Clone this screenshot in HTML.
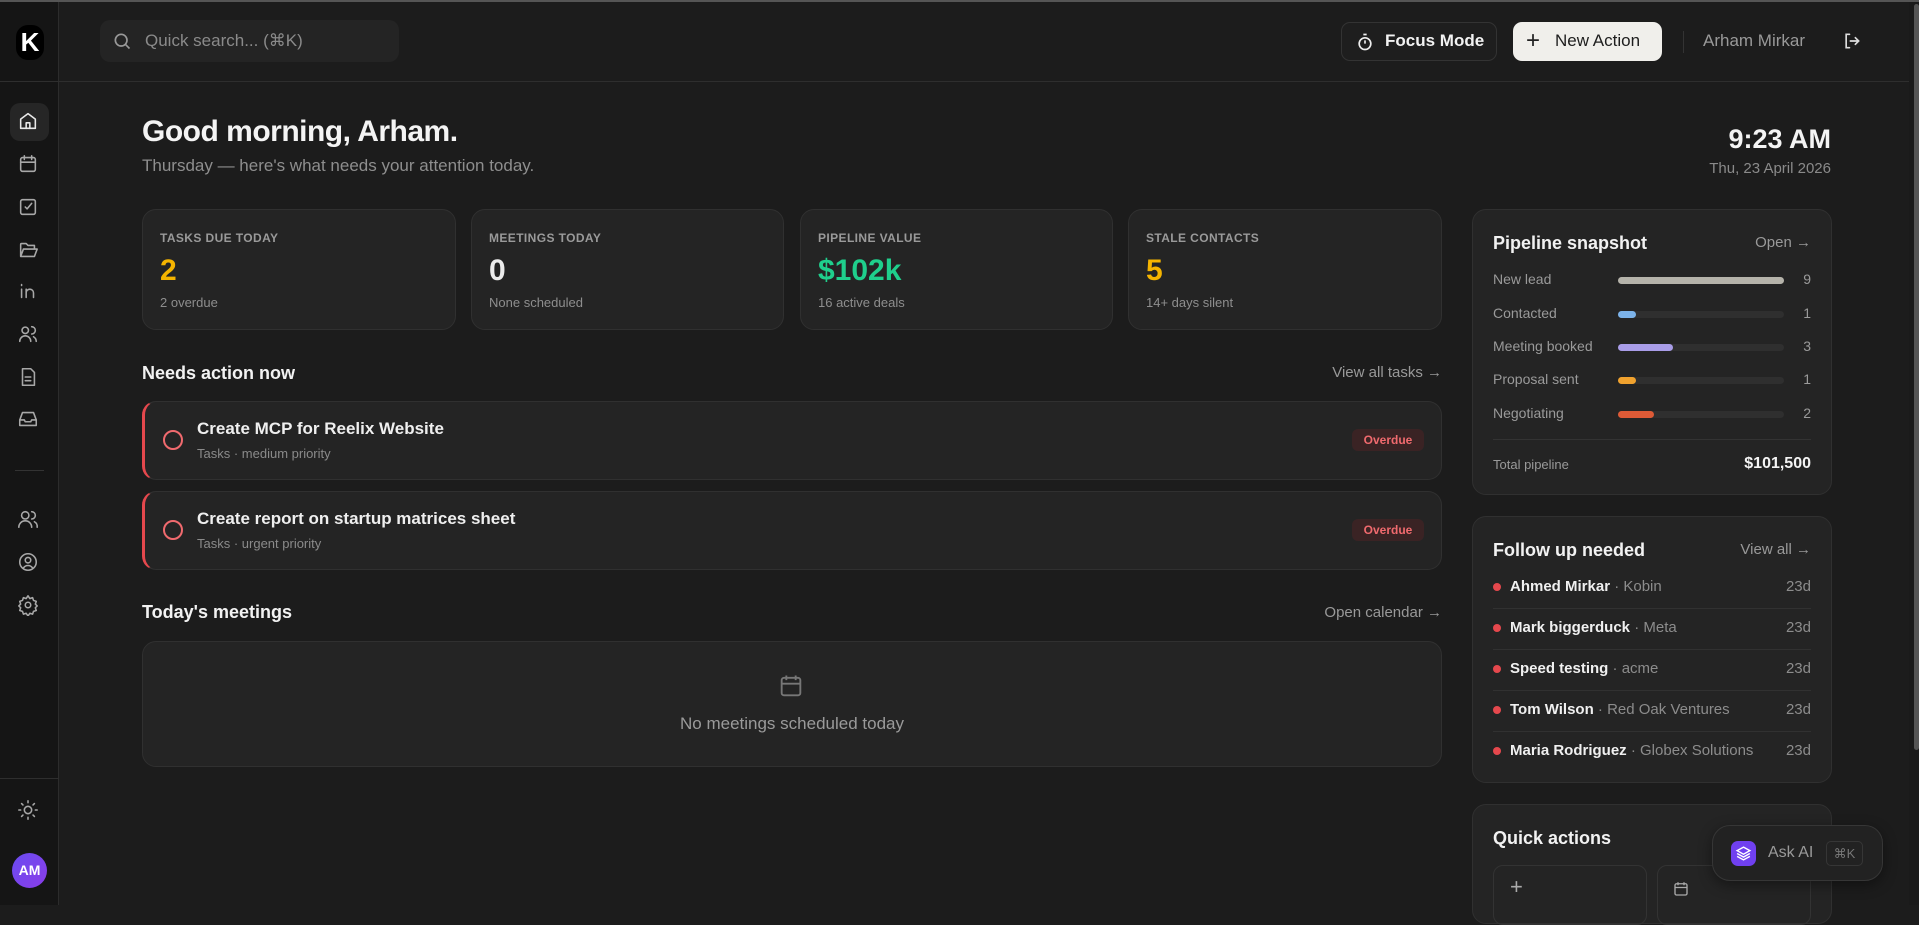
<!DOCTYPE html>
<html><head><meta charset="utf-8"><style>
*{box-sizing:border-box;margin:0;padding:0}
body{width:1919px;height:905px;overflow:hidden;background:#1c1c1c;font-family:"Liberation Sans",sans-serif;color:#ececec;position:relative}
.a{position:absolute}
.side{left:0;top:0;width:59px;height:905px;background:#151515;border-right:1px solid #2c2c2c}
.ic{position:absolute;left:17px;width:24px;height:24px}
.ic svg{width:22px;height:22px;stroke:#a8a8a8;fill:none;stroke-width:1.7;stroke-linecap:round;stroke-linejoin:round}
.card{position:absolute;background:#242424;border:1px solid #303030;border-radius:14px}
.lbl{font-size:12px;font-weight:bold;color:#9a9a9a;letter-spacing:.4px}
.big{font-size:30px;font-weight:bold;margin-top:9px}
.sub{font-size:13px;color:#8e8e8e;margin-top:7px}
.h{font-size:18px;font-weight:bold;color:#f2f2f2}
.lnk{font-size:15px;color:#999}
.row{position:absolute;left:20px;right:20px;font-size:14px;color:#9a9a9a}
.bar{position:absolute;left:125px;width:166px;height:7px;border-radius:4px;background:#2f2f2f;top:6px}
.bar i{display:block;height:7px;border-radius:4px}
.num{position:absolute;right:0;top:0}
.fu{position:absolute;left:20px;right:20px;height:41px;border-bottom:1px solid #313131;font-size:15px}
.fu b{color:#f0f0f0;font-weight:bold}
.fu span{color:#8c8c8c}
.fu .d{position:absolute;left:0;top:15px;width:8px;height:8px;border-radius:50%;background:#e5484d}
.fu .t{position:absolute;left:17px;top:10px}
.fu .r{position:absolute;right:0;top:10px;color:#8c8c8c}
</style></head><body>
<div class="a side"></div>
<div class="a" style="left:0;top:0;width:1919px;height:2px;background:#555;z-index:5"></div>
<div class="a" style="left:0;top:81px;width:1909px;height:1px;background:#2e2e2e"></div>
<!-- logo -->
<div class="a" style="left:16px;top:25px;width:28px;height:35px;background:#000;border-radius:12px;color:#fff;font-weight:bold;font-size:26px;text-align:center;line-height:35px">K</div>
<!-- sidebar icons -->
<div class="a" style="left:10px;top:103px;width:39px;height:38px;background:#262626;border-radius:10px"></div>
<div class="ic" style="top:110px"><svg viewBox="0 0 24 24" style="stroke:#e8e8e8"><path d="M4 10l8-6 8 6v10H4z"/><path d="M10 20v-6h4v6"/></svg></div>
<div class="ic" style="top:153px"><svg viewBox="0 0 24 24"><rect x="4" y="5" width="16" height="15" rx="2"/><path d="M4 10h16M8 3v4M16 3v4"/></svg></div>
<div class="ic" style="top:196px"><svg viewBox="0 0 24 24"><rect x="4" y="4" width="16" height="16" rx="2"/><path d="M9 12l2 2 5-6"/></svg></div>
<div class="ic" style="top:239px"><svg viewBox="0 0 24 24"><path d="M4 19V6a1 1 0 011-1h5l2 2h7v4M4 19l3-8h15l-3 8z"/></svg></div>
<div class="ic" style="top:280px"><svg viewBox="0 0 24 24"><path d="M5 10v9M5 5v1M10 19v-9M10 14a4 4 0 018 0v5"/></svg></div>
<div class="ic" style="top:323px"><svg viewBox="0 0 24 24"><circle cx="9" cy="8" r="3.5"/><path d="M3 20a6 6 0 0112 0M16 4a4 4 0 010 8M21 20a6 6 0 00-3-5"/></svg></div>
<div class="ic" style="top:366px"><svg viewBox="0 0 24 24"><path d="M6 3h9l4 4v14H6z"/><path d="M9 12h6M9 16h6"/></svg></div>
<div class="ic" style="top:408px"><svg viewBox="0 0 24 24"><path d="M3 13l3-8h12l3 8v6H3z"/><path d="M3 13h5l1 2h6l1-2h5"/></svg></div>
<div class="a" style="left:15px;top:470px;width:29px;height:1px;background:#333"></div>
<div class="ic" style="top:508px"><svg viewBox="0 0 24 24"><circle cx="9" cy="8" r="4"/><path d="M2 21a7 7 0 0114 0M16 4a4 4 0 010 8M22 21a6 6 0 00-3-6"/></svg></div>
<div class="ic" style="top:551px"><svg viewBox="0 0 24 24"><circle cx="12" cy="12" r="9"/><circle cx="12" cy="10" r="3"/><path d="M7 18.5a6 6 0 0110 0"/></svg></div>
<div class="ic" style="top:594px"><svg viewBox="0 0 24 24"><circle cx="12" cy="12" r="3"/><path d="M12 2l2 3 3-1 1 3 3 1-1 3 2 2-2 2 1 3-3 1-1 3-3-1-2 3-2-3-3 1-1-3-3-1 1-3-2-2 2-2-1-3 3-1 1-3 3 1z"/></svg></div>
<div class="a" style="left:0;top:778px;width:59px;height:1px;background:#2e2e2e"></div>
<div class="ic" style="top:799px"><svg viewBox="0 0 24 24"><circle cx="12" cy="12" r="4"/><path d="M12 2v2M12 20v2M2 12h2M20 12h2M5 5l1.5 1.5M17.5 17.5L19 19M5 19l1.5-1.5M17.5 6.5L19 5"/></svg></div>
<div class="a" style="left:12px;top:853px;width:35px;height:35px;border-radius:50%;background:linear-gradient(135deg,#6a4cf0,#8a3ce8);color:#fff;font-weight:bold;font-size:14px;text-align:center;line-height:35px">AM</div>
<!-- top bar -->
<div class="a" style="left:100px;top:20px;width:299px;height:42px;background:#242424;border-radius:10px"></div>
<svg class="a" style="left:112px;top:31px" width="20" height="20" viewBox="0 0 24 24" fill="none" stroke="#999" stroke-width="2"><circle cx="11" cy="11" r="7"/><path d="M16 16l5 5"/></svg>
<div class="a" style="left:145px;top:31px;font-size:17px;color:#8a8a8a">Quick search... (⌘K)</div>
<div class="a" style="left:1341px;top:22px;width:156px;height:39px;border:1px solid #333;border-radius:9px;background:#1e1e1e"></div>
<svg class="a" style="left:1355px;top:32px" width="20" height="20" viewBox="0 0 24 24" fill="none" stroke="#eee" stroke-width="2"><circle cx="12" cy="14" r="7"/><path d="M12 14V10M10 3h4"/></svg>
<div class="a" style="left:1385px;top:31px;font-size:17px;font-weight:bold;color:#f2f2f2">Focus Mode</div>
<div class="a" style="left:1513px;top:22px;width:149px;height:39px;background:#f0efeb;border-radius:9px"></div>
<div class="a" style="left:1526px;top:27px;font-size:24px;color:#222">+</div>
<div class="a" style="left:1555px;top:31px;font-size:17px;color:#1e1e1e">New Action</div>
<div class="a" style="left:1683px;top:31px;width:1px;height:22px;background:#333"></div>
<div class="a" style="left:1703px;top:31px;font-size:17px;color:#999">Arham Mirkar</div>
<svg class="a" style="left:1842px;top:31px" width="20" height="20" viewBox="0 0 24 24" fill="none" stroke="#ddd" stroke-width="2" stroke-linecap="round"><path d="M9 4H5v16h4M10 12h10M16 8l4 4-4 4"/></svg>
<!-- scrollbar -->
<div class="a" style="left:1909px;top:2px;width:10px;height:903px;background:#1a1a1a"></div>
<div class="a" style="left:1914px;top:4px;width:5px;height:746px;background:#555;border-radius:3px"></div>
<!-- greeting -->
<div class="a" style="left:142px;top:115px;font-size:30px;font-weight:bold;color:#f4f4f4;letter-spacing:-.5px">Good morning, Arham.</div>
<div class="a" style="left:142px;top:156px;font-size:17px;color:#8e8e8e">Thursday — here's what needs your attention today.</div>
<div class="a" style="right:88px;top:124px;font-size:27px;font-weight:bold;color:#f4f4f4">9:23 AM</div>
<div class="a" style="right:88px;top:160px;font-size:15px;color:#8a8a8a">Thu, 23 April 2026</div>
<!-- stats -->
<div class="card" style="left:142px;top:209px;width:314px;height:121px;padding:21px 17px"><div class="lbl">TASKS DUE TODAY</div><div class="big" style="color:#f5b400">2</div><div class="sub">2 overdue</div></div>
<div class="card" style="left:471px;top:209px;width:313px;height:121px;padding:21px 17px"><div class="lbl">MEETINGS TODAY</div><div class="big">0</div><div class="sub">None scheduled</div></div>
<div class="card" style="left:800px;top:209px;width:313px;height:121px;padding:21px 17px"><div class="lbl">PIPELINE VALUE</div><div class="big" style="color:#1fcf8c">$102k</div><div class="sub">16 active deals</div></div>
<div class="card" style="left:1128px;top:209px;width:314px;height:121px;padding:21px 17px"><div class="lbl">STALE CONTACTS</div><div class="big" style="color:#f5b400">5</div><div class="sub">14+ days silent</div></div>
<!-- needs action -->
<div class="a h" style="left:142px;top:363px">Needs action now</div>
<div class="a lnk" style="right:477px;top:364px">View all tasks →</div>
<div class="card" style="left:142px;top:401px;width:1300px;height:79px;border-left:3px solid #e5484d"></div>
<div class="a" style="left:163px;top:430px;width:20px;height:20px;border:2px solid #f06a6e;border-radius:50%"></div>
<div class="a" style="left:197px;top:419px;font-size:17px;font-weight:bold;color:#efefef">Create MCP for Reelix Website</div>
<div class="a" style="left:197px;top:446px;font-size:13px;color:#8a8a8a">Tasks · medium priority</div>
<div class="a" style="left:1352px;top:429px;width:72px;height:22px;background:#3a2324;border-radius:6px;color:#f06a6e;font-size:12px;font-weight:bold;text-align:center;line-height:22px">Overdue</div>
<div class="card" style="left:142px;top:491px;width:1300px;height:79px;border-left:3px solid #e5484d"></div>
<div class="a" style="left:163px;top:520px;width:20px;height:20px;border:2px solid #f06a6e;border-radius:50%"></div>
<div class="a" style="left:197px;top:509px;font-size:17px;font-weight:bold;color:#efefef">Create report on startup matrices sheet</div>
<div class="a" style="left:197px;top:536px;font-size:13px;color:#8a8a8a">Tasks · urgent priority</div>
<div class="a" style="left:1352px;top:519px;width:72px;height:22px;background:#3a2324;border-radius:6px;color:#f06a6e;font-size:12px;font-weight:bold;text-align:center;line-height:22px">Overdue</div>
<!-- meetings -->
<div class="a h" style="left:142px;top:602px">Today's meetings</div>
<div class="a lnk" style="right:477px;top:604px">Open calendar →</div>
<div class="card" style="left:142px;top:641px;width:1300px;height:126px"></div>
<svg class="a" style="left:777px;top:672px" width="28" height="28" viewBox="0 0 24 24" fill="none" stroke="#777" stroke-width="1.6"><rect x="4" y="5" width="16" height="15" rx="2"/><path d="M4 10h16M8 3v4M16 3v4"/></svg>
<div class="a" style="left:0;width:1584px;top:714px;text-align:center;font-size:17px;color:#9a9a9a">No meetings scheduled today</div>
<!-- pipeline -->
<div class="card" style="left:1472px;top:209px;width:360px;height:286px">
<div class="a h" style="left:20px;top:23px">Pipeline snapshot</div>
<div class="a lnk" style="right:20px;top:24px">Open →</div>
<div class="row" style="top:61px">New lead<div class="bar"><i style="width:166px;background:#b5b3aa"></i></div><span class="num">9</span></div>
<div class="row" style="top:95px">Contacted<div class="bar"><i style="width:18px;background:#7cb3ea"></i></div><span class="num">1</span></div>
<div class="row" style="top:128px">Meeting booked<div class="bar"><i style="width:55px;background:#a99de8"></i></div><span class="num">3</span></div>
<div class="row" style="top:161px">Proposal sent<div class="bar"><i style="width:18px;background:#f0a22e"></i></div><span class="num">1</span></div>
<div class="row" style="top:195px">Negotiating<div class="bar"><i style="width:36px;background:#dd5a36"></i></div><span class="num">2</span></div>
<div class="a" style="left:20px;right:20px;top:229px;height:1px;background:#333"></div>
<div class="row" style="top:247px;font-size:13px">Total pipeline<span class="num" style="color:#f4f4f4;font-weight:bold;font-size:16px;top:-2px">$101,500</span></div>
</div>
<!-- follow up -->
<div class="card" style="left:1472px;top:516px;width:360px;height:267px">
<div class="a h" style="left:20px;top:23px">Follow up needed</div>
<div class="a lnk" style="right:20px;top:24px">View all →</div>
<div class="fu" style="top:51px"><div class="d"></div><div class="t"><b>Ahmed Mirkar</b><span> · Kobin</span></div><div class="r">23d</div></div>
<div class="fu" style="top:92px"><div class="d"></div><div class="t"><b>Mark biggerduck</b><span> · Meta</span></div><div class="r">23d</div></div>
<div class="fu" style="top:133px"><div class="d"></div><div class="t"><b>Speed testing</b><span> · acme</span></div><div class="r">23d</div></div>
<div class="fu" style="top:174px"><div class="d"></div><div class="t"><b>Tom Wilson</b><span> · Red Oak Ventures</span></div><div class="r">23d</div></div>
<div class="fu" style="top:215px;border:none"><div class="d"></div><div class="t"><b>Maria Rodriguez</b><span> · Globex Solutions</span></div><div class="r">23d</div></div>
</div>
<!-- quick actions -->
<div class="card" style="left:1472px;top:804px;width:360px;height:120px">
<div class="a h" style="left:20px;top:23px">Quick actions</div>
<div class="a" style="left:20px;top:60px;width:154px;height:60px;border:1px solid #333;border-radius:10px"><span style="position:absolute;left:16px;top:8px;font-size:22px;color:#aaa">+</span></div>
<div class="a" style="left:184px;top:60px;width:154px;height:60px;border:1px solid #333;border-radius:10px"><svg style="position:absolute;left:14px;top:14px" width="18" height="18" viewBox="0 0 24 24" fill="none" stroke="#aaa" stroke-width="1.8"><rect x="4" y="5" width="16" height="15" rx="2"/><path d="M4 10h16M8 3v4M16 3v4"/></svg></div>
</div>
<!-- ask ai -->
<div class="a" style="left:1712px;top:825px;width:171px;height:56px;background:#222;border:1px solid #363636;border-radius:18px;box-shadow:0 4px 14px rgba(0,0,0,.4)"></div>
<div class="a" style="left:1731px;top:841px;width:25px;height:25px;background:#7040f0;border-radius:7px"></div>
<svg class="a" style="left:1735px;top:845px" width="17" height="17" viewBox="0 0 24 24" fill="none" stroke="#fff" stroke-width="2"><path d="M12 3l9 5-9 5-9-5zM3 12l9 5 9-5M3 16l9 5 9-5"/></svg>
<div class="a" style="left:1768px;top:844px;font-size:16px;color:#9a9a9a">Ask AI</div>
<div class="a" style="left:1826px;top:841px;width:37px;height:25px;border:1px solid #363636;border-radius:5px;font-size:13px;color:#777;text-align:center;line-height:23px">⌘K</div>
</body></html>
